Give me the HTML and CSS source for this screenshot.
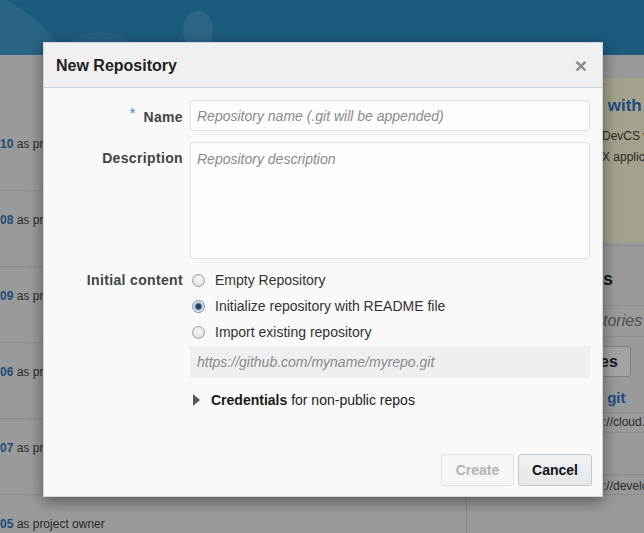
FILE: index.html
```html
<!DOCTYPE html>
<html lang="en">
<head>
<meta charset="utf-8">
<title>New Repository</title>
<link rel="stylesheet" href="styles.css">
</head>
<body>
<div class="page">
  <header class="topbar">
    <svg class="decor" width="644" height="55" viewBox="0 0 644 55">
      <circle cx="-70" cy="140" r="160" fill="#ffffff" fill-opacity="0.06"/>
      <ellipse cx="100" cy="80" rx="52" ry="48" fill="#ffffff" fill-opacity="0.04"/>
      <ellipse cx="198" cy="30" rx="15" ry="19" fill="#ffffff" fill-opacity="0.07"/>
    </svg>
  </header>
  <div class="main">
    <div class="left">
      <div class="left-head"></div>
      <div class="row"><span class="num">10</span> as project owner</div>
      <div class="row"><span class="num">08</span> as project owner</div>
      <div class="row"><span class="num">09</span> as project owner</div>
      <div class="row"><span class="num">06</span> as project owner</div>
      <div class="row"><span class="num">07</span> as project owner</div>
      <div class="row"><span class="num">05</span> as project owner</div>
    </div>
    <div class="right">
      <div class="tabstrip"></div>
      <div class="promo">
        <h3 class="promo-title"><span class="lead">Get started</span> with DevCS</h3>
        <p class="promo-line"><span class="lead lead-p">Learn how to use</span>DevCS with</p>
        <p class="promo-line"><span class="lead lead-p">to build JavaF</span>X applications</p>
      </div>
      <div class="repo-head"><span class="lead">Repositorie</span>s</div>
      <div class="repo-sub"><span class="lead">Browse reposi</span>tories</div>
      <div class="repo-btnrow"><span class="bgbtn"><span class="lead lead-btn">Repositori</span>es</span></div>
      <div class="repo-git"><span class="lead">Clone with</span> git</div>
      <div class="repo-url"><span class="lead">https</span>://cloud.acme.com/repo.git</div>
      <div class="repo-gap"></div>
      <div class="repo-url repo-url2"><span class="lead">https</span>://developer.acme.com</div>
    </div>
  </div>

  <div class="dialog">
    <div class="dlg-head">
      <h2 class="dlg-title">New Repository</h2>
      <span class="dlg-close">×</span>
    </div>
    <div class="dlg-body">
      <div class="form">
        <label class="lbl lbl-mid"><span class="req">*</span>Name</label>
        <input class="field" type="text" placeholder="Repository name (.git will be appended)">
        <label class="lbl lbl-top gap11">Description</label>
        <textarea class="field area gap11" placeholder="Repository description"></textarea>
        <div class="lbl lbl-radio gap8">Initial content</div>
        <div class="options gap8">
          <div class="opt"><span class="radio"></span>Empty Repository</div>
          <div class="opt"><span class="radio radio-on"></span>Initialize repository with README file</div>
          <div class="opt"><span class="radio"></span>Import existing repository</div>
          <input class="field import" type="text" placeholder="https://github.com/myname/myrepo.git">
          <div class="cred"><span class="tri"></span><b class="cred-b">Credentials</b>&nbsp;for non-public repos</div>
        </div>
      </div>
    </div>
    <div class="dlg-foot">
      <button class="btn btn-create" type="button">Create</button>
      <button class="btn btn-cancel" type="button">Cancel</button>
    </div>
  </div>
</div>
</body>
</html>
```
FILE: styles.css
```css
* { box-sizing: border-box; }
html, body { margin: 0; padding: 0; }
body {
  width: 644px;
  height: 533px;
  overflow: hidden;
  font-family: "Liberation Sans", Arial, sans-serif;
  background: #9a9a9a;
  color: #333;
}
.page { position: relative; width: 644px; height: 533px; overflow: hidden; }

/* top bar */
.topbar { height: 55px; background: #1d5b7e; position: relative; overflow: hidden; }
.decor { position: absolute; left: 0; top: 0; }

/* background layout */
.main { display: flex; height: 478px; }
.left { width: 467px; flex: none; border-right: 1px solid #8a8a8a; background: #9a9a9a; }
.left-head { height: 60px; }
.row {
  height: 76px;
  border-bottom: 1px solid #8b8b8b;
  padding-top: 21px;
  font-size: 12px;
  line-height: 16px;
  color: #2a2a2a;
  white-space: nowrap;
}
.num { color: #1f4c78; font-weight: bold; }

.right { flex: 1; background: #9a9a9a; overflow: hidden; white-space: nowrap; }
.lead {
  display: inline-block;
  width: 136px;
  text-align: right;
  overflow: hidden;
  white-space: nowrap;
  vertical-align: top;
}
.lead-p { width: 135px; }
.tabstrip { height: 23px; background: #989898; }
.promo { height: 164px; background: #a4a18d; padding-top: 18px; }
.promo-title { margin: 0; font-size: 17px; line-height: 20px; font-weight: bold; color: #1f4c7e; }
.promo-line { margin: 0; font-size: 12px; line-height: 21px; color: #2a2a2a; }
.promo-title + .promo-line { margin-top: 10px; }
.repo-head {
  margin-top: 3px;
  height: 61px;
  border-top: 1px solid #8a8a8a;
  border-bottom: 1px solid #8a8a8a;
  padding-top: 23px;
  font-size: 18px;
  line-height: 20px;
  font-weight: bold;
  color: #1c1c1c;
}
.repo-sub {
  height: 31px;
  border-bottom: 1px solid #8a8a8a;
  padding-top: 5px;
  font-size: 16px;
  line-height: 20px;
  font-style: italic;
  color: #505050;
}
.repo-btnrow { height: 41px; padding-top: 9px; }
.bgbtn {
  display: inline-block;
  height: 31px;
  line-height: 29px;
  border: 1px solid #7f7f7f;
  border-radius: 3px;
  background: #a3a3a3;
  padding-right: 12px;
  font-size: 16px;
  font-weight: bold;
  color: #1c1c1c;
}
.lead-btn { width: 132px; }
.repo-git {
  height: 35px;
  border-bottom: 1px solid #8a8a8a;
  padding-top: 10px;
  font-size: 15px;
  line-height: 20px;
  font-weight: bold;
  color: #1f4c7e;
}
.repo-url {
  height: 20px;
  border-bottom: 1px solid #8a8a8a;
  font-size: 12px;
  line-height: 19px;
  color: #2a2a2a;
}
.repo-gap { height: 42px; border-bottom: 1px solid #8a8a8a; }
.repo-url2 { padding-top: 2px; }

/* dialog (overlay) */
.dialog {
  position: absolute;
  left: 43px;
  top: 42px;
  width: 560px;
  height: 455px;
  background: #f9f9f9;
  border: 1px solid #cfd4d9;
  box-shadow: 0 4px 14px rgba(0, 0, 0, 0.45);
  display: flex;
  flex-direction: column;
}
.dlg-head {
  height: 45px;
  flex: none;
  background: #f0f0f0;
  border-bottom: 1px solid #c6d0da;
  display: flex;
  align-items: center;
  justify-content: space-between;
  padding: 1px 15px 0 12px;
}
.dlg-title { margin: 0; font-size: 16px; font-weight: bold; color: #222; line-height: 20px; }
.dlg-close { font-size: 21px; font-weight: bold; color: #8a8a8a; line-height: 20px; }

.dlg-body { flex: 1; padding-top: 12px; }
.form {
  display: grid;
  grid-template-columns: 139px 400px;
  column-gap: 7px;
  align-items: start;
}
.lbl {
  text-align: right;
  font-size: 14px;
  font-weight: bold;
  letter-spacing: 0.35px;
  color: #444;
  white-space: nowrap;
}
.lbl-mid { align-self: center; line-height: 18px; margin-top: -1px; }
.lbl-top { padding-top: 8px; line-height: 17px; }
.lbl-radio { line-height: 26px; }
.req { color: #3a7fd0; vertical-align: 4px; margin-right: 8px; font-weight: normal; font-size: 14px; }

.field {
  display: block;
  width: 400px;
  height: 31px;
  margin: 0;
  border: 1px solid #dcdfe3;
  border-radius: 3px;
  background: #fdfdfe;
  padding: 0 6px;
  font-family: "Liberation Sans", Arial, sans-serif;
  font-size: 14px;
  color: #333;
  outline: none;
}
.field::placeholder { color: #8a8a8a; font-style: italic; opacity: 1; }
.area { height: 117px; padding: 8px 6px; line-height: 16px; resize: none; }

.form .gap11 { margin-top: 11px; }
.form .gap8 { margin-top: 8px; }

.options { display: flex; flex-direction: column; }
.opt {
  height: 26px;
  display: flex;
  align-items: center;
  font-size: 14px;
  color: #333;
  white-space: nowrap;
}
.radio {
  width: 13px;
  height: 13px;
  flex: none;
  border-radius: 50%;
  border: 1px solid #a0a0a0;
  background: radial-gradient(circle at 50% 40%, #fbfbfb 0, #e6e6e6 60%, #d2d2d2 100%);
  margin: 0 10px 0 2px;
}
.radio-on {
  border-color: #7a8ea4;
  background: radial-gradient(circle at 50% 50%, #15355a 0, #24496f 2.2px, #7f98b3 3.4px, #e4eaf0 4.6px, #f2f4f7 100%);
}
.options .import {
  height: 32px;
  margin-top: 1px;
  background: #eeeff1;
  border-color: #eeeff1;
  border-radius: 0;
}
.cred {
  margin-top: 11px;
  height: 22px;
  display: flex;
  align-items: center;
  font-size: 14px;
  color: #222;
  white-space: nowrap;
}
.cred-b { font-weight: bold; color: #1a1a1a; }
.tri {
  width: 0;
  height: 0;
  border-left: 7px solid #5a5a5a;
  border-top: 6px solid transparent;
  border-bottom: 6px solid transparent;
  margin: 0 11px 0 3px;
}

.dlg-foot {
  flex: none;
  display: flex;
  justify-content: flex-end;
  gap: 4px;
  padding: 0 10px 10px 0;
}
.btn {
  height: 32px;
  border-radius: 3px;
  font-family: "Liberation Sans", Arial, sans-serif;
  font-size: 14px;
  font-weight: bold;
  padding: 0;
  margin: 0;
}
.btn-create {
  width: 73px;
  background: #f4f6f8;
  border: 1px solid #e0e3e6;
  color: #b2b2b2;
}
.btn-cancel {
  width: 74px;
  background: linear-gradient(#eff1f3, #e3e7ea);
  border: 1px solid #c3c9cf;
  color: #111;
}
```
